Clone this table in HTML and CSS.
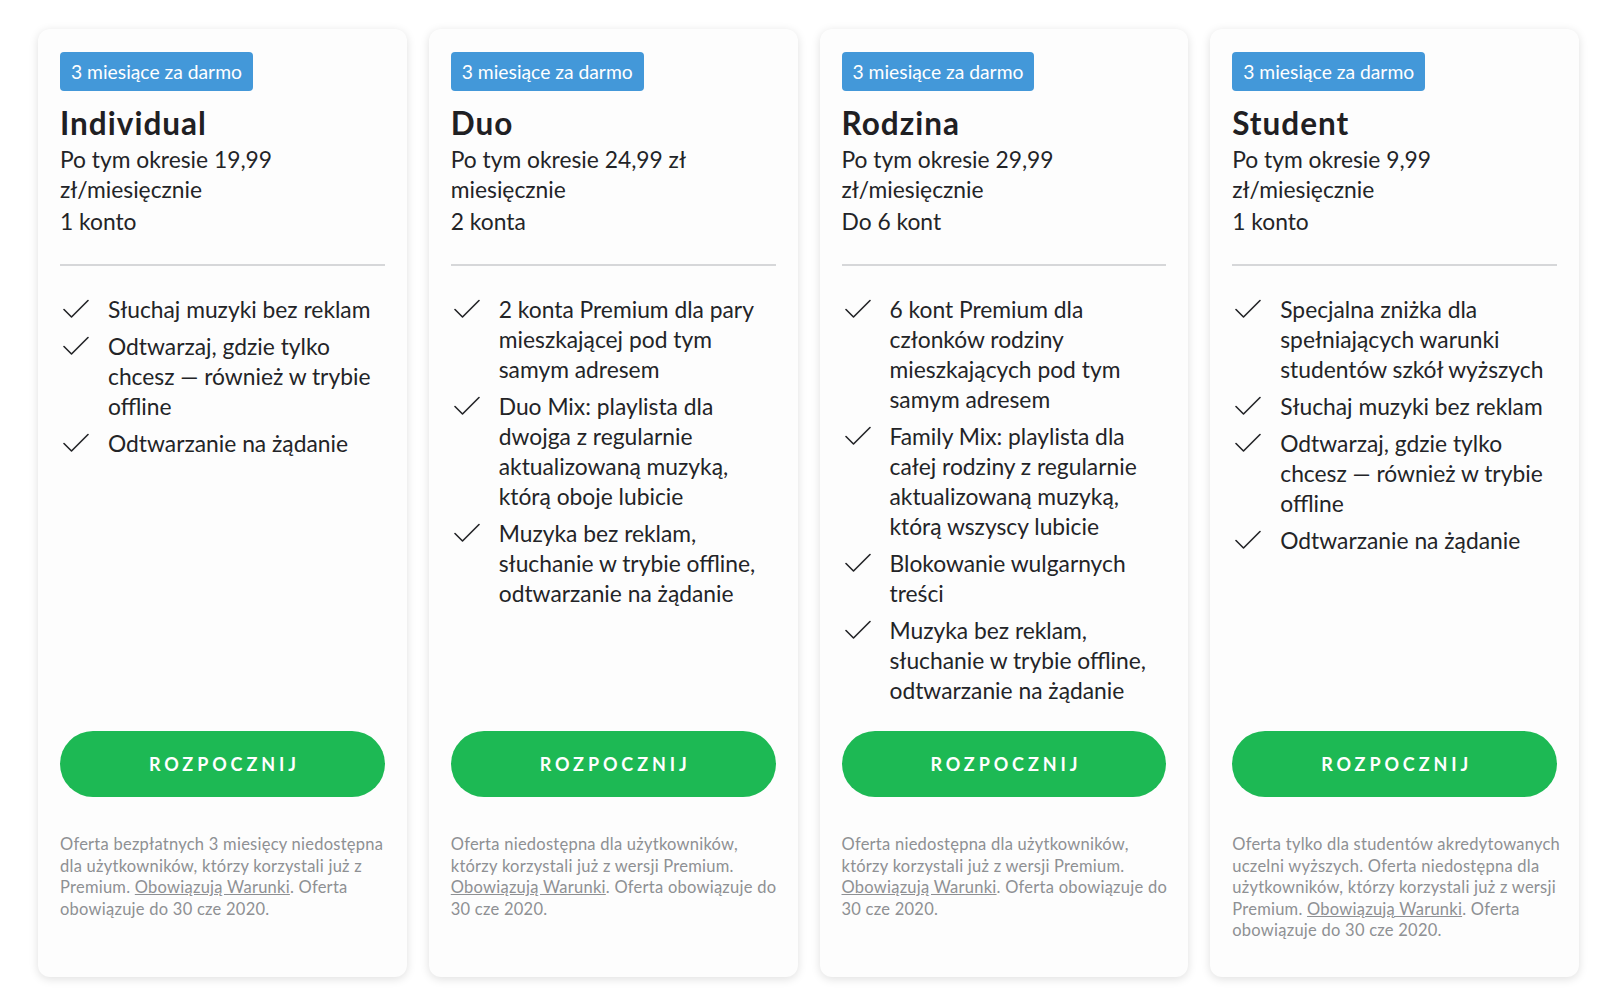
FILE: index.html
```html
<!DOCTYPE html>
<html lang="pl">
<head>
<meta charset="utf-8">
<title>Premium</title>
<link rel="stylesheet" href="styles.css">
</head>
<body>
<main class="plans">
  <section class="card">
    <span class="badge">3 miesiące za darmo</span>
    <h2 class="title">Individual</h2>
    <p class="price">Po tym okresie 19,99 zł/miesięcznie</p>
    <p class="accounts">1 konto</p>
    <hr class="sep">
    <ul class="features">
      <li><svg class="check" viewBox="0 0 26 20"><path d="M1 10.5 L8.5 18 L25 1.5"/></svg><span>Słuchaj muzyki bez reklam</span></li>
      <li><svg class="check" viewBox="0 0 26 20"><path d="M1 10.5 L8.5 18 L25 1.5"/></svg><span>Odtwarzaj, gdzie tylko chcesz — również w trybie offline</span></li>
      <li><svg class="check" viewBox="0 0 26 20"><path d="M1 10.5 L8.5 18 L25 1.5"/></svg><span>Odtwarzanie na żądanie</span></li>
    </ul>
    <div class="bottom">
      <a class="btn" href="#">ROZPOCZNIJ</a>
      <p class="note">Oferta bezpłatnych 3 miesięcy niedostępna dla użytkowników, którzy korzystali już z Premium. <a href="#">Obowiązują Warunki</a>. Oferta obowiązuje do 30 cze 2020.</p>
    </div>
  </section>
  <section class="card">
    <span class="badge">3 miesiące za darmo</span>
    <h2 class="title">Duo</h2>
    <p class="price">Po tym okresie 24,99 zł miesięcznie</p>
    <p class="accounts">2 konta</p>
    <hr class="sep">
    <ul class="features">
      <li><svg class="check" viewBox="0 0 26 20"><path d="M1 10.5 L8.5 18 L25 1.5"/></svg><span>2 konta Premium dla pary mieszkającej pod tym samym adresem</span></li>
      <li><svg class="check" viewBox="0 0 26 20"><path d="M1 10.5 L8.5 18 L25 1.5"/></svg><span>Duo Mix: playlista dla dwojga z regularnie aktualizowaną muzyką, którą oboje lubicie</span></li>
      <li><svg class="check" viewBox="0 0 26 20"><path d="M1 10.5 L8.5 18 L25 1.5"/></svg><span>Muzyka bez reklam, słuchanie w trybie offline, odtwarzanie na żądanie</span></li>
    </ul>
    <div class="bottom">
      <a class="btn" href="#">ROZPOCZNIJ</a>
      <p class="note">Oferta niedostępna dla użytkowników, którzy korzystali już z wersji Premium. <a href="#">Obowiązują Warunki</a>. Oferta obowiązuje do 30 cze 2020.</p>
    </div>
  </section>
  <section class="card">
    <span class="badge">3 miesiące za darmo</span>
    <h2 class="title">Rodzina</h2>
    <p class="price">Po tym okresie 29,99 zł/miesięcznie</p>
    <p class="accounts">Do 6 kont</p>
    <hr class="sep">
    <ul class="features">
      <li><svg class="check" viewBox="0 0 26 20"><path d="M1 10.5 L8.5 18 L25 1.5"/></svg><span>6 kont Premium dla członków rodziny mieszkających pod tym samym adresem</span></li>
      <li><svg class="check" viewBox="0 0 26 20"><path d="M1 10.5 L8.5 18 L25 1.5"/></svg><span>Family Mix: playlista dla całej rodziny z regularnie aktualizowaną muzyką, którą wszyscy lubicie</span></li>
      <li><svg class="check" viewBox="0 0 26 20"><path d="M1 10.5 L8.5 18 L25 1.5"/></svg><span>Blokowanie wulgarnych treści</span></li>
      <li><svg class="check" viewBox="0 0 26 20"><path d="M1 10.5 L8.5 18 L25 1.5"/></svg><span>Muzyka bez reklam, słuchanie w trybie offline, odtwarzanie na żądanie</span></li>
    </ul>
    <div class="bottom">
      <a class="btn" href="#">ROZPOCZNIJ</a>
      <p class="note">Oferta niedostępna dla użytkowników, którzy korzystali już z wersji Premium. <a href="#">Obowiązują Warunki</a>. Oferta obowiązuje do 30 cze 2020.</p>
    </div>
  </section>
  <section class="card">
    <span class="badge">3 miesiące za darmo</span>
    <h2 class="title">Student</h2>
    <p class="price">Po tym okresie 9,99 zł/miesięcznie</p>
    <p class="accounts">1 konto</p>
    <hr class="sep">
    <ul class="features">
      <li><svg class="check" viewBox="0 0 26 20"><path d="M1 10.5 L8.5 18 L25 1.5"/></svg><span>Specjalna zniżka dla spełniających warunki studentów szkół wyższych</span></li>
      <li><svg class="check" viewBox="0 0 26 20"><path d="M1 10.5 L8.5 18 L25 1.5"/></svg><span>Słuchaj muzyki bez reklam</span></li>
      <li><svg class="check" viewBox="0 0 26 20"><path d="M1 10.5 L8.5 18 L25 1.5"/></svg><span>Odtwarzaj, gdzie tylko chcesz — również w trybie offline</span></li>
      <li><svg class="check" viewBox="0 0 26 20"><path d="M1 10.5 L8.5 18 L25 1.5"/></svg><span>Odtwarzanie na żądanie</span></li>
    </ul>
    <div class="bottom">
      <a class="btn" href="#">ROZPOCZNIJ</a>
      <p class="note">Oferta tylko dla studentów akredytowanych uczelni wyższych. Oferta niedostępna dla użytkowników, którzy korzystali już z wersji Premium. <a href="#">Obowiązują Warunki</a>. Oferta obowiązuje do 30 cze 2020.</p>
    </div>
  </section>
</main>
</body>
</html>
```
FILE: styles.css
```css
* { box-sizing: border-box; }
html, body { margin: 0; padding: 0; background: #ffffff; }
body {
  font-family: "Lato", "Noto Sans", sans-serif;
  color: #232427;
  width: 1600px;
  height: 1005px;
  overflow: hidden;
}
.plans {
  display: grid;
  grid-template-columns: repeat(4, 1fr);
  gap: 22px;
  padding: 29px 21px 0 38px;
}
.card {
  display: flex;
  flex-direction: column;
  align-items: flex-start;
  background: #fdfdfd;
  border-radius: 12px;
  box-shadow: 0 2px 10px rgba(0, 0, 0, 0.13);
  padding: 23px 22px 0 22px;
  height: 948px;
}
.badge {
  display: inline-block;
  background: #4398d9;
  color: #ffffff;
  font-size: 19.3px;
  line-height: 39px;
  height: 39px;
  padding: 0 11px;
  border-radius: 4px;
}
.title {
  margin: 13px 0 0 0;
  font-size: 31.5px;
  line-height: 38px;
  font-weight: 700;
  letter-spacing: 1px;
  color: #1f2023;
}
.price {
  margin: 2px 0 0 0;
  font-size: 22.8px;
  line-height: 30px;
}
.accounts {
  margin: 2px 0 0 0;
  font-size: 22.8px;
  line-height: 30px;
}
.sep {
  align-self: stretch;
  border: 0;
  border-top: 2px solid #d6d7d9;
  margin: 28px 0 0 0;
}
.features {
  list-style: none;
  margin: 28px 0 0 0;
  padding: 0;
  flex: 1;
  display: flex;
  flex-direction: column;
  gap: 7px;
  align-self: stretch;
}
.features li {
  display: flex;
  align-items: flex-start;
  font-size: 22.8px;
  line-height: 30px;
}
.check {
  flex: none;
  width: 26px;
  height: 20px;
  margin: 5px 19px 0 3px;
  fill: none;
  stroke: #232427;
  stroke-width: 1.6;
  stroke-linecap: round;
  stroke-linejoin: round;
}
.bottom {
  align-self: stretch;
  height: 246px;
}
.btn {
  display: flex;
  align-items: center;
  justify-content: center;
  height: 66px;
  border-radius: 33px;
  background: #1db954;
  color: #ffffff;
  font-size: 18px;
  font-weight: 700;
  letter-spacing: 3.9px;
  padding-left: 4px;
  text-decoration: none;
}
.note {
  margin: 37px -4px 0 0;
  font-size: 16.5px;
  line-height: 21.5px;
  letter-spacing: 0.25px;
  color: #8e9093;
}
.note a {
  color: #8e9093;
  text-decoration: underline;
}
```
